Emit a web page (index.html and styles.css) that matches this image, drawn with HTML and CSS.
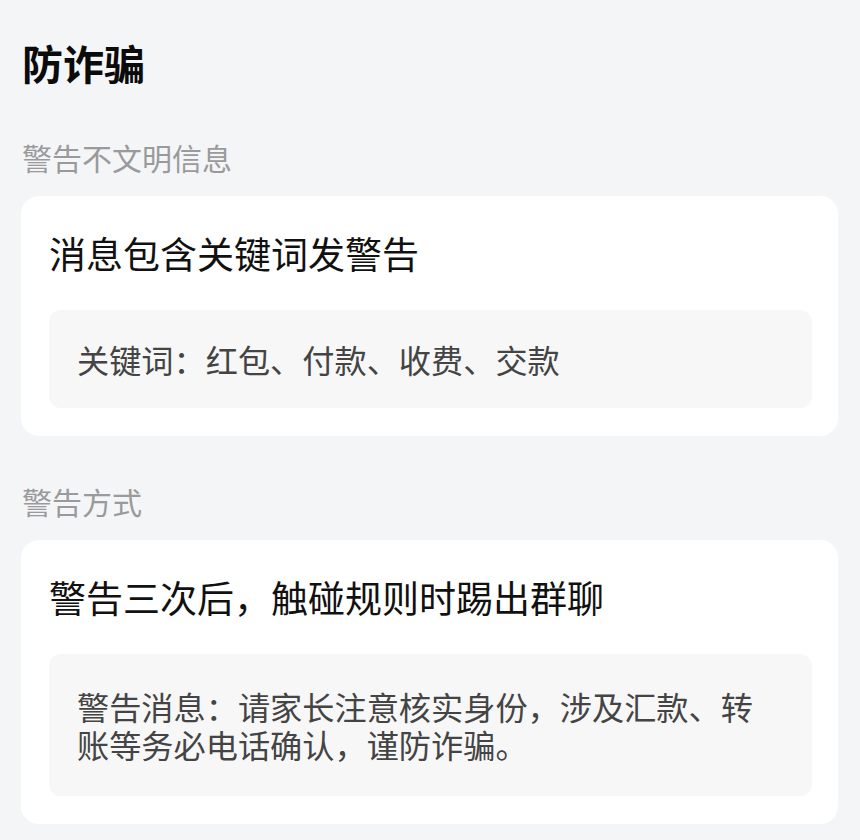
FILE: index.html
```html
<!DOCTYPE html>
<html lang="zh-CN">
<head>
    <meta charset="UTF-8">
    <meta name="viewport" content="width=device-width, initial-scale=1.0">
    <title>防诈骗</title>

    <!-- Styling -->
    <link rel="stylesheet" href="styles.css">
</head>
<body>
    <div class="page">

        <h1 class="page-title">防诈骗</h1>

        <div class="section-label first">警告不文明信息</div>
        <div class="card">
            <div class="card-title">消息包含关键词发警告</div>
            <div class="note-box">关键词：红包、付款、收费、交款</div>
        </div>

        <div class="section-label">警告方式</div>
        <div class="card">
            <div class="card-title">警告三次后，触碰规则时踢出群聊</div>
            <div class="note-box multi">警告消息：请家长注意核实身份，涉及汇款、转账等务必电话确认，谨防诈骗。</div>
        </div>

    </div>
</body>
</html>
```

FILE: styles.css
```css
*{
    box-sizing: border-box;
    margin: 0;
    padding: 0;
}

body{
    background-color: #f4f5f7;
    font-family: "Noto Sans CJK SC", "Noto Sans", sans-serif;
    color: #111;
}

.page{
    padding: 34px 22px 0 21px;
}

.page-title{
    font-size: 41px;
    font-weight: 700;
    line-height: 56px;
    padding-left: 1px;
    color: #0b0b0b;
}

.section-label{
    font-size: 30px;
    line-height: 40px;
    color: #9a9a9c;
    margin-top: 45px;
    margin-bottom: 19px;
    padding-left: 1px;
}

.section-label.first{
    margin-top: 47px;
}

.card{
    background-color: #fff;
    border-radius: 18px;
    padding: 33px 26px 28px 28px;
}

.card-title{
    font-size: 37px;
    line-height: 48px;
    color: #111;
    margin-bottom: 33px;
}

.note-box{
    background-color: #f7f7f8;
    border-radius: 12px;
    padding: 30px 36px 30px 28px;
    font-size: 32.2px;
    line-height: 38px;
    color: #444;
}

.note-box.multi{
    padding-top: 33px;
    padding-bottom: 33px;
}
```
